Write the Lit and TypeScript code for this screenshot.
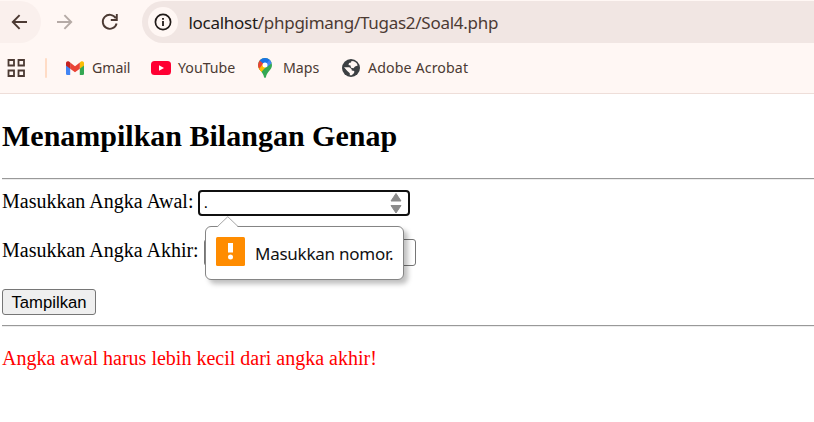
import { LitElement, html, css, svg } from "lit";
import { customElement } from "lit/decorators.js";

const backIcon = svg`<path d="M16 9H2M8.6 2.2 1.8 9l6.8 6.8" fill="none" stroke="currentColor" stroke-width="1.9"/>`;

@customElement("browser-toolbar")
export class BrowserToolbar extends LitElement {
  static styles = css`
    :host { display: block; background: #fff7f4; border-bottom: 1px solid #eeded9; height: 93px; color: #4c3a33;
      font-family: "Noto Sans", "Open Sans", sans-serif; overflow: hidden; }
    svg { display: block; flex: none; }
    .nav { display: flex; align-items: center; height: 42px; padding-top: 1px; }
    .back { width: 41px; height: 42px; border-radius: 0 21px 21px 0; background: #faf0ed; display: flex; align-items: center; padding-left: 11px; box-sizing: border-box; }
    .forward { margin-left: 14px; color: #b5aaa6; transform: scaleX(-1); }
    .reload { margin-left: 28px; }
    .omnibox { margin-left: 23px; flex: 1; height: 42px; background: #f1e6e3; border-radius: 21px 0 0 21px; display: flex; align-items: center; padding-left: 6px; }
    .info { width: 30px; height: 30px; border-radius: 50%; background: #fff7f4; display: grid; place-items: center; color: #201a18; }
    .url { margin: 2px 0 0 10.500px; font-size: 17px; line-height: 24px; letter-spacing: -0.280px; white-space: nowrap; }
    .host { color: #201a18; }
    .bookmarks { display: flex; align-items: center; height: 50px; padding-left: 7px; font-size: 14.2px; line-height: 20px; white-space: nowrap; }
    .divider { width: 2px; height: 20px; background: #ffdcc6; margin: 0 19px 0 20px; border-radius: 1px; }
    .mark { display: flex; align-items: center; }
    .gmail span { margin-left: 8px; width: 59px; letter-spacing: -0.1px; }
    .youtube span { margin-left: 7px; width: 80px; }
    .maps span { margin-left: 11px; width: 59px; }
    .acrobat span { margin-left: 8px; letter-spacing: 0.120px; }
  `;
  render() {
    return html`
      <div class="nav">
        <div class="back"><svg width="18" height="18" viewBox="0 0 18 18">${backIcon}</svg></div>
        <svg class="forward" width="18" height="18" viewBox="0 0 18 18">${backIcon}</svg>
        <svg class="reload" width="18" height="18" viewBox="0 0 18 18">
          <path d="M14.8 5.2A7 7 0 1 0 15.6 10.5M15.8 1v6h-6" fill="none" stroke="currentColor" stroke-width="1.9"/>
        </svg>
        <div class="omnibox">
          <div class="info"><svg width="18" height="18" viewBox="0 0 18 18">
            <circle cx="9" cy="9" r="7.6" fill="none" stroke="currentColor" stroke-width="1.7"/>
            <path d="M8.1 8h1.8v5H8.1zM8.1 4.9h1.8v1.8H8.1z" fill="currentColor"/></svg></div>
          <div class="url"><span class="host">localhost</span>/phpgimang/Tugas2/Soal4.php</div>
        </div>
      </div>
      <div class="bookmarks">
        <svg width="18" height="18" viewBox="0 0 18 18"><path d="M1.500 1h5.500v5.500H1.500zM11.500 1H17v5.500h-5.500zM1.500 11.500H7V17H1.500zM11.500 11.500H17V17h-5.500z" fill="none" stroke="currentColor" stroke-width="1.800"/></svg>
        <div class="divider"></div>
        <div class="mark gmail">
          <svg width="18" height="14" viewBox="0 0 18 14">
            <path d="M0 2h4.2v12H1.3A1.3 1.3 0 0 1 0 12.700z" fill="#4285f4"/>
            <path d="M13.800 2H18v10.700A1.300 1.300 0 0 1 16.700 14h-2.900z" fill="#34a853"/>
            <path d="M13.800 1.600 15 .6c1.300-1 3-.2 3 1.500v2.300l-4.200 3.300z" fill="#fbbc04"/>
            <path d="M4.200 1.600 9 5.200l4.800-3.600v6.100L9 11.300 4.200 7.700z" fill="#ea4335"/>
            <path d="M0 2.100C0 .4 1.700-.4 3 .6l1.200 1v6.100L0 4.400z" fill="#c5221f"/>
          </svg><span>Gmail</span></div>
        <div class="mark youtube">
          <svg width="20" height="14" viewBox="0 0 20 14"><rect width="20" height="14" rx="3.500" fill="#ff0033"/><path d="M8 4.200v5.600L13 7z" fill="#fff"/></svg>
          <span>YouTube</span></div>
        <div class="mark maps">
          <svg width="14" height="20" viewBox="0 0 14 20">
            <defs><clipPath id="pin"><path d="M7 0a7 7 0 0 1 7 7c0 5-5 6.500-6 12q-1 2-2 0C5 13.500 0 12 0 7a7 7 0 0 1 7-7z"/></clipPath></defs>
            <g clip-path="url(#pin)"><path d="M0 0h14v20H0z" fill="#34a853"/>
              <path d="M-1 9 7 7 3 15l-4-2z" fill="#fbbc04"/><path d="m3 14 6-7-2-2-7 7z" fill="#fbbc04"/>
              <path d="M2 1 7 7l-5.500 5L-1 7z" fill="#ea4335"/><path d="m1 11 4-5 3 3-5 5z" fill="#fbbc04"/>
              <path d="M1.500 2.500 7 7l6-5-4-3H4z" fill="#1a73e8"/><path d="M7 7 12 1.500 14 5 9 9z" fill="#4285f4"/></g>
            <circle cx="7" cy="7" r="2.500" fill="#fff"/>
          </svg><span>Maps</span></div>
        <div class="mark acrobat">
          <svg width="18" height="18" viewBox="0 0 18 18"><circle cx="9" cy="9" r="9" fill="#3c4043"/>
            <path d="M9.500 2Q14.500 2.200 15.700 6.400L13 7.500 11.500 9.300 9 8.700 8.500 6.500 6.500 6 7 4 9 3.500z" fill="#fff7f4"/>
            <path d="M2 8.300h5.300L9.500 10l.3 1.600 2.500.4-.2 2-2.400 2.200-1.900.1v-2L5.300 12z" fill="#fff7f4"/></svg>
          <span>Adobe Acrobat</span></div>
      </div>`;
  }
}

@customElement("validation-bubble")
export class ValidationBubble extends LitElement {
  static styles = css`
    :host { display: block; position: absolute; left: 7px; top: 36px; z-index: 1; }
    .box { box-sizing: border-box; width: 199px; height: 54px; background: #fff; border: 1px solid #858585; border-radius: 6px;
      box-shadow: 4px 4px 5px rgba(0, 0, 0, 0.25); display: flex; align-items: center; padding: 0 0 4px 10px;
      font: 17px/24px "Noto Sans", "Open Sans", sans-serif; color: #111; white-space: nowrap; }
    .arrow { position: absolute; left: 12px; top: -10px; }
    .text { margin: 5px 0 0 9.500px; letter-spacing: -0.250px; }
  `;
  render() {
    return html`<div class="box">
        <svg width="29" height="29" viewBox="0 0 29 29"><rect width="29" height="29" rx="1.500" fill="#ff8c00"/>
          <path d="M12 6h5v9.500h-5z" fill="#fff"/><circle cx="14.500" cy="20" r="2.500" fill="#fff"/></svg>
        <div class="text">Masukkan nomor.</div>
      </div>
      <svg class="arrow" width="22" height="12" viewBox="0 0 22 12"><path d="M.5 11 10.800.7 21 11v1H.5z" fill="#fff"/><path d="M.5 10.500 10.800.7 21 10.500" fill="none" stroke="#a5a5a5"/></svg>`;
  }
}

@customElement("app-root")
export class AppRoot extends LitElement {
  static styles = css`
    :host { display: block; height: 422px; background: #fff; overflow: hidden; font: 20px/23px "Liberation Serif", "Times New Roman", serif; color: #000; }
    .page { padding-left: 2px; }
    h2 { margin: 0; padding-top: 25px; height: 59px; font-size: 30px; line-height: 34px; font-weight: 700; white-space: nowrap; }
    .rule { height: 1px; background: #999; border-bottom: 1px solid #ededed; }
    .row { display: flex; align-items: flex-start; white-space: nowrap; }
    .first { padding-top: 10px; height: 49px; }
    .second { height: 50px; }
    .field { position: relative; box-sizing: border-box; width: 212px; height: 26px; margin-left: 5px; }
    .input { box-sizing: border-box; width: 212px; height: 27px; border: 1px solid #767676; border-radius: 3px; background: #fff; }
    .active { height: 26px; border: 2px solid #101010; border-radius: 4px; display: flex; align-items: center; justify-content: space-between; padding: 0 6px 0 3px; font: 16.700px/22px "Liberation Sans", Arial, sans-serif; }
    button { box-sizing: border-box; width: 94px; height: 26px; padding: 0; border: 1px solid #767676; border-radius: 3px; background: #efefef; color: #000; font: 16.670px/23px "Liberation Sans", Arial, sans-serif; display: block; margin-bottom: 10px; }
    .error { color: #f00; padding-top: 20px; white-space: nowrap; }
  `;
  render() {
    return html`
      <browser-toolbar></browser-toolbar>
      <main class="page">
        <h2>Menampilkan Bilangan Genap</h2>
        <div class="rule"></div>
        <div class="row first"><span>Masukkan Angka Awal:</span>
          <div class="field"><div class="input active"><span>.</span>
            <svg width="12" height="22" viewBox="0 0 12 22"><path d="M6 1.500 11 9H1zM1 13.500h10L6 21z" fill="#8b8b8b" stroke="#8b8b8b" stroke-linejoin="round"/></svg></div>
            <validation-bubble></validation-bubble></div>
        </div>
        <div class="row second"><span>Masukkan Angka Akhir:</span><div class="field"><div class="input"></div></div></div>
        <button>Tampilkan</button>
        <div class="rule"></div>
        <div class="error">Angka awal harus lebih kecil dari angka akhir!</div>
      </main>`;
  }
}
